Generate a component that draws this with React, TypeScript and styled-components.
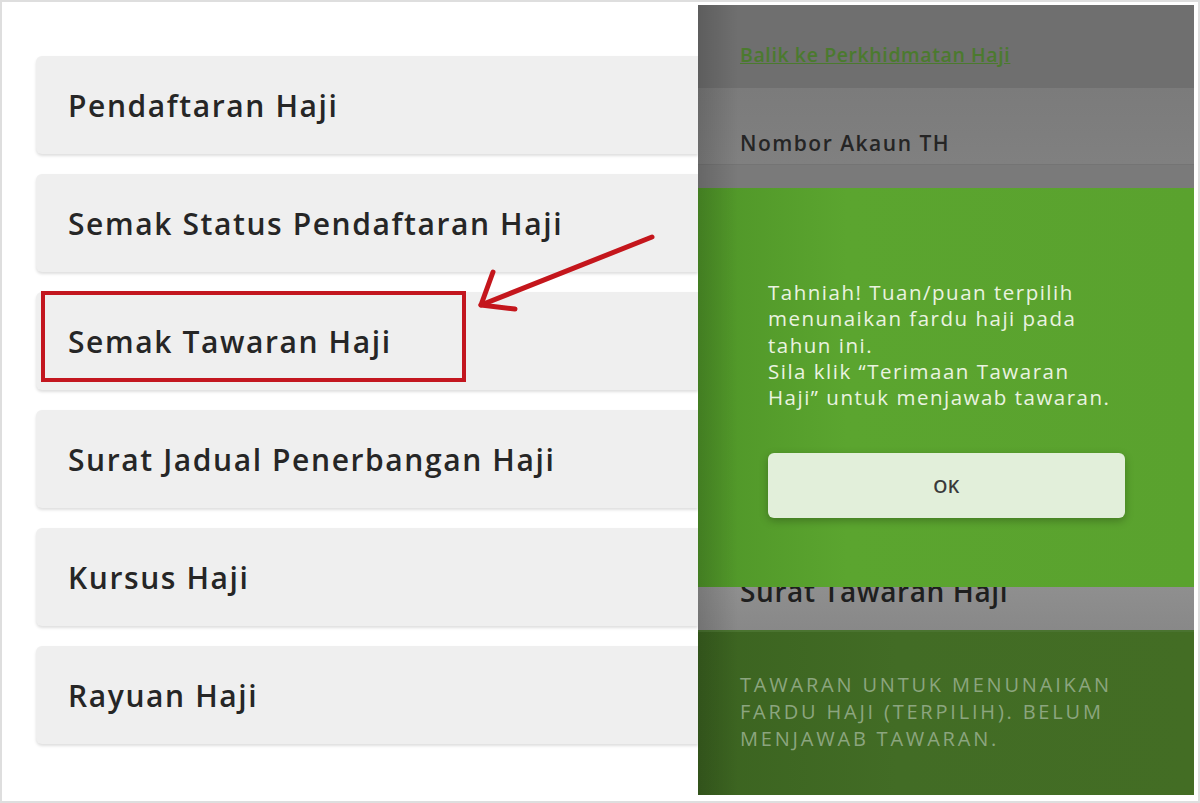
import React from "react"
import styled, { createGlobalStyle } from "styled-components"

const GlobalStyle = createGlobalStyle`
  html, body {
    margin: 0;
    padding: 0;
    background: #ffffff;
  }
  * {
    box-sizing: border-box;
  }
`

const Frame = styled.div`
  position: relative;
  display: flex;
  width: 1200px;
  height: 803px;
  border: 2px solid #dedede;
  background: #ffffff;
  overflow: hidden;
  font-family: "Open Sans", "Liberation Sans", sans-serif;
`

const MenuColumn = styled.div`
  flex: 1;
  display: flex;
  flex-direction: column;
  gap: 20px;
  padding: 54px 0 0 34px;
`

const MenuCard = styled.div`
  position: relative;
  display: flex;
  align-items: center;
  height: 98px;
  padding-left: 32px;
  background: #efefef;
  border-radius: 6px 0 0 6px;
  box-shadow: 0 2px 3px rgba(0, 0, 0, 0.13);
  font-size: 30px;
  font-weight: 600;
  letter-spacing: 1.6px;
  color: #262626;
`

const Highlight = styled.div`
  position: absolute;
  top: -1px;
  left: 5px;
  width: 425px;
  height: 91px;
  border: 4px solid #c3161f;
`

const Arrow = styled.svg`
  position: absolute;
  left: 0;
  top: 0;
  pointer-events: none;
`

const PhonePanel = styled.div`
  position: relative;
  display: flex;
  flex-direction: column;
  width: 496px;
  margin: 3px 4px 6px 0;
  overflow: hidden;

  &::after {
    content: "";
    position: absolute;
    inset: 0;
    pointer-events: none;
    background: linear-gradient(90deg, rgba(0, 0, 0, 0.16), rgba(0, 0, 0, 0) 40px);
  }
`

const BackBar = styled.div`
  display: flex;
  align-items: flex-end;
  height: 83px;
  padding: 0 0 20px 42px;
  background: #6f6f6f;
`

const BackLink = styled.a`
  font-size: 19.5px;
  font-weight: 600;
  color: #4b7a2e;
  text-decoration: underline;
  letter-spacing: 0.6px;
`

const AccountRow = styled.div`
  display: flex;
  align-items: flex-end;
  height: 77px;
  padding: 0 0 7px 42px;
  background: linear-gradient(180deg, #7b7b7b, #808080);
  border-bottom: 1px solid #747474;
  font-size: 21px;
  font-weight: 600;
  color: #252525;
  letter-spacing: 1.5px;
`

const AccountSpacer = styled.div`
  height: 23px;
  background: #7a7a7a;
`

const Modal = styled.div`
  display: flex;
  flex-direction: column;
  height: 399px;
  padding: 91px 0 0 70px;
  background: linear-gradient(90deg, #4f9528, #5ba52f 30%, #5aa22e);
`

const ModalText = styled.p`
  margin: 0;
  font-size: 20.5px;
  line-height: 26.3px;
  color: #eaf3e0;
  letter-spacing: 1.5px;
`

const OkButton = styled.button`
  width: 357px;
  height: 65px;
  margin-top: 43px;
  border: none;
  border-radius: 6px;
  background: #e2efda;
  box-shadow: 0 3px 8px rgba(0, 0, 0, 0.25);
  font-family: inherit;
  font-size: 18px;
  font-weight: 600;
  letter-spacing: 0.5px;
  color: #3a3a3a;
`

const OfferTitleBand = styled.div`
  height: 43px;
  padding-left: 42px;
  overflow: hidden;
  background: linear-gradient(180deg, #8f8f8f, #888888);
`

const OfferTitle = styled.div`
  margin-top: -14px;
  font-size: 28px;
  font-weight: 600;
  line-height: 36px;
  letter-spacing: 0.6px;
  color: #1f1f1f;
`

const StatusBox = styled.div`
  flex: 1;
  padding: 39px 0 0 42px;
  background: linear-gradient(90deg, #3b6320, #426c25 40%, #436d24);
  border-top: 2px solid #4a7330;
`

const StatusText = styled.p`
  margin: 0;
  font-size: 20px;
  line-height: 27px;
  color: #8ca57f;
  letter-spacing: 2.8px;
`

const menu = [
  "Pendaftaran Haji",
  "Semak Status Pendaftaran Haji",
  "Semak Tawaran Haji",
  "Surat Jadual Penerbangan Haji",
  "Kursus Haji",
  "Rayuan Haji",
]

export default function App() {
  return (
    <>
      <GlobalStyle />
      <Frame>
        <MenuColumn>
          {menu.map(item => (
            <MenuCard key={item}>
              {item}
              {item === "Semak Tawaran Haji" && <Highlight />}
            </MenuCard>
          ))}
        </MenuColumn>

        <PhonePanel>
          <BackBar>
            <BackLink>Balik ke Perkhidmatan Haji</BackLink>
          </BackBar>
          <AccountRow>Nombor Akaun TH</AccountRow>
          <AccountSpacer />
          <Modal>
            <ModalText>
              Tahniah! Tuan/puan terpilih
              <br />
              menunaikan fardu haji pada
              <br />
              tahun ini.
              <br />
              Sila klik “Terimaan Tawaran
              <br />
              Haji” untuk menjawab tawaran.
            </ModalText>
            <OkButton>OK</OkButton>
          </Modal>
          <OfferTitleBand>
            <OfferTitle>Surat Tawaran Haji</OfferTitle>
          </OfferTitleBand>
          <StatusBox>
            <StatusText>
              TAWARAN UNTUK MENUNAIKAN
              <br />
              FARDU HAJI (TERPILIH). BELUM
              <br />
              MENJAWAB TAWARAN.
            </StatusText>
          </StatusBox>
        </PhonePanel>

        <Arrow width="1200" height="803" viewBox="0 0 1200 803">
          <g
            fill="none"
            stroke="#c4161c"
            strokeWidth="5"
            strokeLinecap="round"
            strokeLinejoin="round"
          >
            <path d="M650 235 L479 303" />
            <path d="M491 270 L479 303 L513 307" />
          </g>
        </Arrow>
      </Frame>
    </>
  )
}
